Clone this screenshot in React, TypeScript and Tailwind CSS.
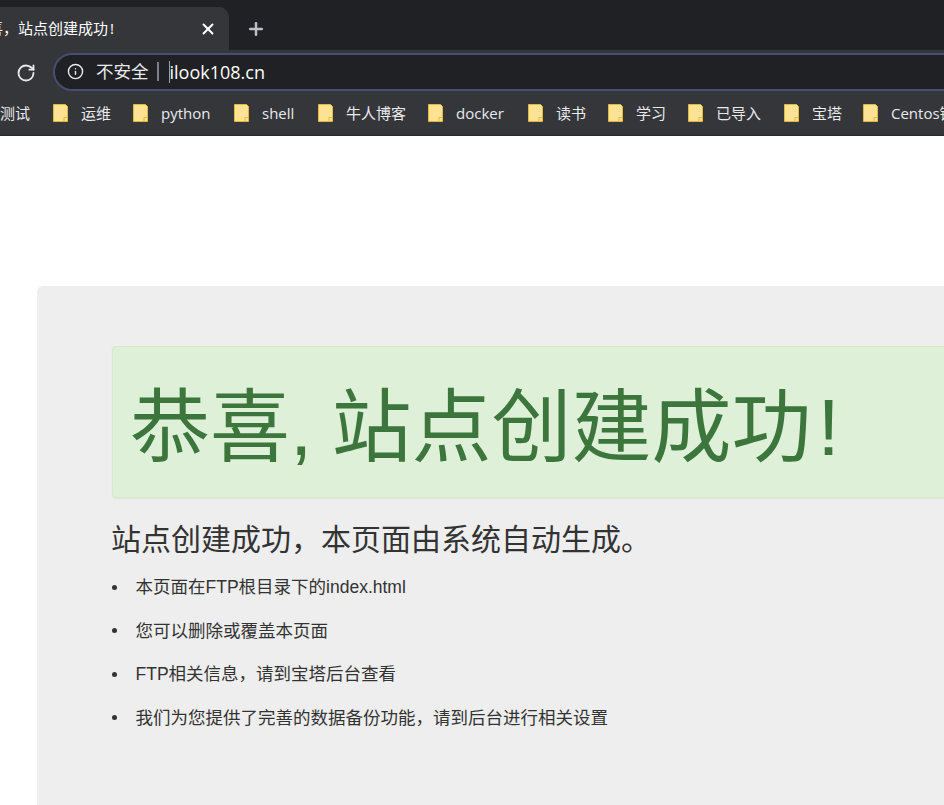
import { RotateCw, Info, X, Plus } from "lucide-react";

const ui = "font-['Open_Sans','Noto_Sans_CJK_SC',sans-serif]";
const cjk = "font-['Liberation_Sans','Noto_Sans_CJK_SC',sans-serif]";

function Folder() {
  return (
    <svg width="16" height="18" viewBox="0 0 16 18" className="shrink-0">
      <path d="M0.5 0.5H12.5L14.5 2.5V17.5H0.5Z" fill="#fde293" stroke="#e2b93f" />
      <path d="M11 17.5V13.5H14.5" fill="#fde293" stroke="#e2b93f" />
    </svg>
  );
}

const marks: [string, number][] = [
  ["运维", 80],
  ["python", 101],
  ["shell", 84],
  ["牛人博客", 110],
  ["docker", 100],
  ["读书", 80],
  ["学习", 80],
  ["已导入", 96],
  ["宝塔", 79],
  ["Centos镜像", 120],
];

const items = [
  "本页面在FTP根目录下的index.html",
  "您可以删除或覆盖本页面",
  "FTP相关信息，请到宝塔后台查看",
  "我们为您提供了完善的数据备份功能，请到后台进行相关设置",
];

export default function App() {
  return (
    <div className="w-[944px] h-[805px] overflow-hidden bg-white">
      <header className={`h-[136px] bg-[#35363a] text-[#e8eaed] border-b border-[#2a2b2e] ${ui}`}>
        <div className="h-[50px] bg-[#202124] flex">
          <div className="mt-[7px] w-[229px] h-[43px] shrink-0 bg-[#35363a] rounded-tr-[10px] flex items-center overflow-hidden">
            <span className="text-[15px] whitespace-nowrap text-white w-[199px] shrink-0 overflow-hidden">
              <span className="inline-block ml-[-12px]">喜，站点创建成功<span className="ml-[2px]">!</span></span>
            </span>
            <X size={18} strokeWidth={2.6} className="text-white shrink-0" />
          </div>
          <div className="ml-[17px] mt-[19px]">
            <Plus size={20} strokeWidth={3} className="text-[#bdc1c6]" />
          </div>
        </div>
        <div className="h-[46px] flex items-center pl-[16px]">
          <RotateCw size={20} strokeWidth={2.2} className="text-[#e8eaed] shrink-0" />
          <div className="ml-[17px] w-[1000px] h-[38px] mt-[-3px] shrink-0 rounded-full bg-[#202124] border-2 border-[#46506c] flex items-center pl-[12px]">
            <Info size={17} strokeWidth={2} className="shrink-0" />
            <span className="ml-[12px] text-[17.5px] leading-none">不安全</span>
            <span className="ml-[8px] w-[2px] h-[19px] bg-[#7d8084]" />
            <span className="ml-[10px] w-px h-[22px] bg-[#9aa0a6]" />
            <span className="text-[18px] leading-none text-white">ilook108.cn</span>
          </div>
        </div>
        <div className="h-[34px] flex items-center text-[15px] whitespace-nowrap">
          <span className="w-[30px] mr-[23px] shrink-0 overflow-hidden flex justify-end">
            <span className="shrink-0">部署测试</span>
          </span>
          <div className="flex">
            {marks.map(([t, w]) => (
              <div key={t} className="flex items-center shrink-0" style={{ width: w }}>
                <Folder />
                <span className="ml-[12px]">{t}</span>
              </div>
            ))}
          </div>
        </div>
      </header>
      <main className={`pt-[150px] pl-[37px] ${cjk}`}>
        <section className="w-[1200px] h-[600px] bg-[#eeeeee] rounded-t-[6px] pt-[60px] pl-[75px] text-[#333333]">
          <div className="w-[1000px] h-[152px] bg-[#dff0d8] border border-[#d6e9c6] rounded-[4px] pl-[17px] pt-[37px] shadow-[0_1px_2px_rgba(0,0,0,0.05)]">
            <h1 className="text-[80px] leading-[88px] font-normal text-[#3c763d] whitespace-nowrap [word-spacing:-3px]">
              恭喜, 站点创建成功<span className="ml-[6px]">!</span>
            </h1>
          </div>
          <p className="mt-[20px] ml-[-1px] text-[30px] leading-[44px]">站点创建成功，本页面由系统自动生成。</p>
          <ul className="mt-[12px] text-[17.5px] leading-[26px]">
            {items.map((t) => (
              <li key={t} className="mb-[17.6px] flex items-center">
                <span className="w-[5px] h-[5px] rounded-full bg-[#333333] mr-[18.5px] shrink-0" />
                {t}
              </li>
            ))}
          </ul>
        </section>
      </main>
    </div>
  );
}
